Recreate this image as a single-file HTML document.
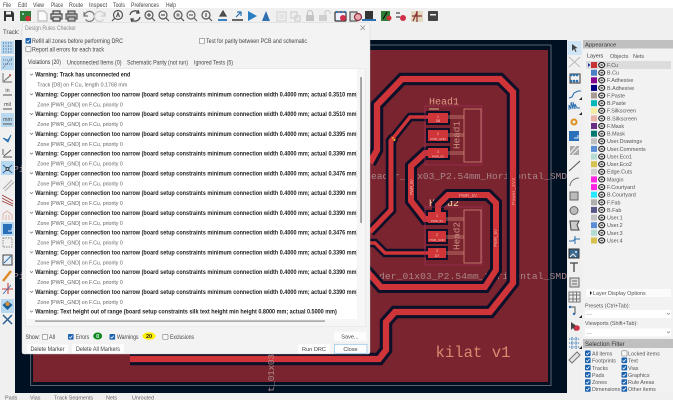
<!DOCTYPE html>
<html><head><meta charset="utf-8"><style>
html,body{margin:0;padding:0;background:#f0f0f0;width:673px;height:400px;overflow:hidden}
svg{display:block;filter:blur(.35px)}
text{font-family:"Liberation Sans",sans-serif}
.m{font-family:"Liberation Mono",monospace}
.menu{font-size:6.2px;fill:#444}
.w{font-size:6.2px;font-weight:bold;fill:#222}
.s{font-size:5.800px;fill:#666}
.d{font-size:6px;fill:#444}
.l{font-size:5.400px;fill:#555}
.f{font-size:5.400px;fill:#555}
.st{font-size:5.400px;fill:#666}
.pad{font-size:3.600px;fill:#f2c4c4;text-anchor:middle}
.lab{font-size:4.400px;fill:#eeb0a8}
</style></head><body>
<svg width="673" height="400" viewBox="0 0 673 400" xmlns="http://www.w3.org/2000/svg">
<defs>
<clipPath id="cv"><rect x="15" y="40" width="552" height="353"/></clipPath>
<clipPath id="lc"><rect x="26" y="69" width="331" height="250"/></clipPath>
<g id="eye"><ellipse cx="0" cy="0" rx="3" ry="2.600" fill="#e8e8e8" stroke="#222" stroke-width="1.100"/><ellipse cx="0" cy="0" rx="1.400" ry=".8" fill="#555"/></g>
<g id="ck"><rect x="0" y="0" width="5.600" height="5.600" rx=".8" fill="#1a62b0"/><path d="M1.200 2.900l1.100 1.200 2.100-2.500" fill="none" stroke="#fff" stroke-width=".8"/></g>
<g id="un"><rect x=".3" y=".3" width="5.200" height="5.200" rx=".8" fill="#fafafa" stroke="#777" stroke-width=".6"/></g>
</defs>

<rect width="673" height="400" fill="#f0f0f0"/>
<rect width="673" height="8" fill="#fff"/>
<text class="menu" x="3" y="7" textLength="8" lengthAdjust="spacingAndGlyphs">File</text><text class="menu" x="18" y="7" textLength="9" lengthAdjust="spacingAndGlyphs">Edit</text><text class="menu" x="33" y="7" textLength="11" lengthAdjust="spacingAndGlyphs">View</text><text class="menu" x="51" y="7" textLength="12" lengthAdjust="spacingAndGlyphs">Place</text><text class="menu" x="69" y="7" textLength="14" lengthAdjust="spacingAndGlyphs">Route</text><text class="menu" x="89" y="7" textLength="18" lengthAdjust="spacingAndGlyphs">Inspect</text><text class="menu" x="113" y="7" textLength="12" lengthAdjust="spacingAndGlyphs">Tools</text><text class="menu" x="131" y="7" textLength="28" lengthAdjust="spacingAndGlyphs">Preferences</text><text class="menu" x="166" y="7" textLength="10" lengthAdjust="spacingAndGlyphs">Help</text>

<!-- top toolbar -->
<g fill="none" stroke-width="1.200">
<path d="M4 11h8l2 2v8H4z" fill="#333"/><rect x="6" y="11.500" width="5" height="3" fill="#eee"/><rect x="6" y="17" width="6" height="4" fill="#eee"/>
<rect x="20" y="11" width="11" height="10" fill="#2f7d37"/><circle cx="28" cy="18.500" r="2.800" fill="#d0303a"/><circle cx="23" cy="14" r="1" fill="#bde"/>
<path d="M38 11h6l3 3v7h-9z" stroke="#bbb" fill="#fafafa"/>
<path d="M53 14v-3h7v3M53 19h-2v-5h11v5h-2M53 17h7v4h-7z" stroke="#444" fill="#ddd"/>
<path d="M68 14v-3h7v3M68 19h-2v-5h11v5h-2M68 17h7v4h-7z" stroke="#555" fill="#bbb"/>
<path d="M84 12v4h4M84.500 15.500a5 5 0 1 1 1 4" stroke="#777"/>
<path d="M105 12v4h-4M104.500 15.500a5 5 0 1 0-1 4" stroke="#ccc"/>
<circle cx="118" cy="15" r="4.500" stroke="#555"/><path d="M114.500 18.500l-2.500 2.500M116.500 17l1.500-4 1.500 4" stroke="#555"/>
<path d="M130 15a5 5 0 0 1 9-2M140 17a5 5 0 0 1-9 2" stroke="#444"/><path d="M138 10l1 3-3 0M132 22l-1-3 3 0" stroke="#444"/>
<circle cx="149" cy="15" r="4" stroke="#555"/><path d="M152 18l3 3M147 15h4M149 13v4" stroke="#555"/>
<circle cx="163" cy="15" r="4" stroke="#555"/><path d="M166 18l3 3M161 15h4" stroke="#555"/>
<circle cx="178" cy="15" r="4" stroke="#555"/><path d="M181 18l3 3" stroke="#555"/><rect x="176.500" y="13.500" width="3" height="3" fill="#888"/>
<circle cx="191" cy="15" r="4" stroke="#666"/><path d="M194 18l3 3" stroke="#666"/><rect x="189" y="14" width="4" height="2" fill="#999"/>
<circle cx="206" cy="15" r="4" stroke="#555"/><path d="M209 18l3 3M206 13v4" stroke="#555"/>
<path d="M219 20h7M223 11l-3 5h6z" stroke="#444" fill="#555"/><rect x="218" y="19" width="9" height="2" fill="#3a7fc0"/>
<path d="M233 20h10M236 17l5-5M241 16v-4h-4" stroke="#2a6fb0"/><rect x="232" y="19" width="11" height="2" fill="#666"/>
<path d="M248 11v10l9-5z" fill="#2a7fc0"/><path d="M262 21l4-10 4 10z" fill="#2f6fae"/>
<path d="M277 12h9v9h-9z" stroke="#d5d5d5"/><rect x="279" y="14" width="5" height="5" fill="#e3e3e3"/>
<path d="M291 12h6v6h-6zM295 16h5v5h-5z" stroke="#d0d0d0"/>
<rect x="306" y="15" width="8" height="6" fill="#c4c4c4"/><path d="M307.500 15v-2a2.500 2.500 0 0 1 5 0v2" stroke="#c4c4c4"/>
<rect x="319" y="15" width="8" height="6" fill="#cfcfcf"/><path d="M325 15v-2a2.500 2.500 0 0 1 5 0v1" stroke="#cfcfcf"/>
<rect x="335" y="12" width="11" height="9" rx="1" stroke="#333" fill="#eef"/><circle cx="337" cy="12" r="1.100" fill="#2a6fb0"/><circle cx="341" cy="12" r="1.100" fill="#2a6fb0"/><circle cx="345" cy="12" r="1.100" fill="#2a6fb0"/><circle cx="343" cy="18" r="3" fill="#d0304a"/>
<rect x="350" y="12" width="7" height="9" stroke="#555" fill="#ddd"/><circle cx="358" cy="17" r="3.500" stroke="#903040" fill="#e8a8b0"/>
<rect x="365" y="11" width="8" height="8" fill="#333"/><rect x="362" y="19" width="14" height="2" fill="#2a6fb0"/>
<rect x="381" y="11" width="9" height="10" fill="#2f7d37"/><path d="M383 19l4-7" stroke="#111"/><circle cx="389" cy="18" r="2.500" fill="#d0303a"/>
<path d="M396 13h4M396 17h4" stroke="#888" stroke-width="2"/><circle cx="403" cy="18" r="3" fill="#d0304a"/>
<rect x="411" y="11" width="12" height="11" fill="#e2d9c0"/><path d="M412 16h10M417 11v11M417 12l-4 9" stroke="#8a3030"/>
<rect x="428" y="11" width="10" height="10" rx="1" fill="#444"/><rect x="430" y="14" width="6" height="1.500" fill="#eee"/>
</g>
<text class="st" x="3" y="34" style="fill:#444;font-size:6px">Track: 1.</text>

<!-- canvas -->
<rect x="15" y="40" width="552" height="353" fill="#001023"/>
<g clip-path="url(#cv)">
<rect x="30.700" y="45" width="520.300" height="340.500" fill="none" stroke="#707a84" stroke-width=".8"/>
<rect x="33" y="50" width="515" height="332" fill="#7a2430"/>

<!-- text that sits behind the copper -->
<text class="m" x="371" y="179" font-size="9.600" fill="#a98688" textLength="196">eader_01x03_P2.54mm_Horizontal_SMD</text>
<text class="m" x="379" y="279" font-size="9.600" fill="#a98688" textLength="188">der_01x03_P2.54mm_Horizontal_SMD</text>
<text class="m" x="429" y="206" font-size="10" fill="#f0d8a8" textLength="30">Head2</text>

<!-- halos -->
<g fill="none" stroke="#0c1029" stroke-linejoin="miter">
<path stroke-width="12.500" d="M370 163L377 150V105L402 79H500L513 92V283L490 312H395L386 322V350L379 359H130"/>
<path stroke-width="12" d="M366 270L381 287H485L496 270V203L488 195H448L438 205V222"/>
<path stroke-width="12" d="M438 153H425L411 166V201L425 219H438"/>
<path stroke-width="8.500" d="M428 117H410L394 137"/>
<path stroke-width="10.500" d="M394 137L391 141V210L370 232"/>
<path stroke-width="8.500" d="M438 253H385L375 243H366"/>
</g>
<!-- pad halos -->
<g fill="#0c1029"><rect x="426" y="111" width="24" height="14"/><rect x="426" y="128" width="24" height="15"/><rect x="426" y="146" width="24" height="14"/><rect x="426" y="210" width="22" height="15"/><rect x="426" y="229" width="22" height="15"/><rect x="426" y="246" width="22" height="14"/></g>
<g fill="none" stroke="#cf3538" stroke-linejoin="miter">
<path stroke-width="6.300" d="M370 163L377 150V105L402 79H500L513 92V283L490 312H395L386 322V350L379 359H130"/>
<path stroke-width="6" d="M366 270L381 287H485L496 270V203L488 195H448L438 205V222"/>
<path stroke-width="6" d="M438 153H425L411 166V201L425 219H438"/>
<path stroke-width="3.500" d="M428 117H410L394 137"/>
<path stroke-width="5" d="M394 137L391 141V210L370 232"/>
<path stroke-width="3.500" d="M438 253H385L375 243H366"/>
</g>
<!-- pads -->
<g fill="#cf3538"><rect x="428" y="113" width="20" height="10"/><rect x="428" y="130" width="20" height="11"/><rect x="428" y="148" width="20" height="10"/><rect x="428" y="212" width="18" height="11"/><rect x="428" y="231" width="18" height="11"/><rect x="428" y="248" width="18" height="10"/></g>
<text class="pad" x="438" y="118">1</text><text class="pad" x="438" y="122">D8</text>
<text class="pad" x="438" y="135">2</text><text class="pad" x="438" y="140" style="font-size:3px">PWR_GND</text>
<text class="pad" x="438" y="153">3</text><text class="pad" x="438" y="157.500" style="font-size:3px">PWR_5V</text>
<text class="pad" x="437" y="217">1</text><text class="pad" x="437" y="222" style="font-size:3px">PWR_5V</text>
<text class="pad" x="437" y="236">2</text><text class="pad" x="437" y="241" style="font-size:3px">PWR_GND</text>
<text class="pad" x="437" y="252">3</text><text class="pad" x="437" y="257">D7</text>

<!-- silkscreen / fab -->
<g fill="none">
<rect x="425" y="106" width="57" height="59" stroke="#a03058" stroke-width=".7"/>
<rect x="425" y="207" width="57" height="58" stroke="#a03058" stroke-width=".7"/>
<g stroke="#d08a78" stroke-width=".8">
<rect x="464" y="109" width="17" height="53"/><rect x="464" y="210" width="17" height="53"/>
<path d="M448 116h16M448 118h16M448 134h16M448 136h16M448 152h16M448 154h16M446 218h18M446 220h18M446 236h18M446 238h18M446 252h18M446 254h18"/>
</g>
</g>
<path d="M429 109h10" stroke="#e8d8a0" stroke-width=".8"/>
<circle cx="393" cy="138" r="1" fill="#e0a030"/><circle cx="394.500" cy="140" r="1" fill="#e0c030"/>
<text class="m" x="429" y="104.500" font-size="10" fill="#dd9a82" textLength="30">Head1</text>
<text class="m" transform="translate(459.500 149) rotate(-90)" font-size="9.400" fill="#cc9080" textLength="28">Head1</text>
<text class="m" transform="translate(459.500 250) rotate(-90)" font-size="9.400" fill="#cc9080" textLength="28">Head2</text>
<text class="m" x="435.500" y="357" font-size="15.600" fill="#d98a6e" textLength="75">kilat v1</text>
<text class="m" transform="translate(274 392) rotate(-90)" font-size="9.600" fill="#a98688" textLength="38">t_01x03</text>
<text class="m" x="13" y="172" font-size="9.600" fill="#a98688">Pi</text>
<text class="m" x="13" y="279" font-size="9.600" fill="#a98688">Pi</text>
<text class="lab" transform="translate(413 195) rotate(-90)" textLength="16">PWR_5V</text>
<text class="lab" transform="translate(497 247) rotate(-90)" textLength="18">PWR_5V</text>
<text class="lab" transform="translate(515 205) rotate(-90)" textLength="27">Power_3V3</text>
<text class="lab" x="459" y="197" textLength="18">PWR_5V</text>
</g>

<!-- left toolbar -->
<rect x="0" y="40" width="15" height="353" fill="#f0f0f0"/>
<g fill="#b8d8f0"><rect x="1" y="41" width="13" height="13"/><rect x="1" y="56" width="13" height="14"/><rect x="1" y="113" width="13" height="14"/><rect x="1" y="161" width="13" height="14"/><rect x="1" y="222" width="13" height="14"/><rect x="1" y="299" width="13" height="14"/></g>
<g fill="none" stroke="#555" stroke-width=".9">
<path d="M3 43h9M3 46h9M3 49h9M3 52h9" stroke="#3a5a8a" stroke-dasharray="1 1.500"/>
<path d="M3 68L12 58M3 60h9M3 64h9" stroke="#5a6a8a" stroke-dasharray="1 1"/>
<path d="M3 73v9h9M4 81l7-6" stroke="#666"/><circle cx="10" cy="75" r="1" fill="#d05050" stroke="none"/>
<path d="M3 95h9M3 109h9M3 124h9" stroke="#555"/>
<path d="M3 138l5 2 3-5-3 7z" fill="#2a6fb0" stroke="#2a6fb0"/>
<path d="M3 155v-6M3 157h9M4 156l7-6" stroke="#555"/>
<path d="M3 165l9 8M3 173l9-8" stroke="#2a5f90"/><circle cx="7.500" cy="169" r="1.500" fill="#b8d8f0" stroke="#333"/>
<path d="M3 189l9-9M5 191l9-9" stroke="#aaa"/>
<path d="M2 195l11 6M2 198l11 6M2 201l11 5" stroke="#a04040"/>
<path d="M3 220v-6l4-3 5 4v5M6 220v-5M9 220v-5" stroke="#e0b0a8"/>
<rect x="3" y="224" width="9" height="10" fill="#2a70b8" stroke="none"/><path d="M8 231h4v-3" stroke="#dcecff"/>
<rect x="3" y="238" width="9" height="9" stroke="#888" stroke-dasharray="1.500 1"/>
<rect x="3" y="255" width="9" height="10" stroke="#333" fill="#e8eef5"/><path d="M4 263l7-7" stroke="#2a6fb0"/>
<path d="M3 281l8-10" stroke="#e08a2a" stroke-width="2.500"/>
<path d="M2 289h11M8 283v11" stroke="#d04040" stroke-width="1.100"/><path d="M3 294l8-9" stroke="#3a6fb0"/>
<path d="M7.500 301l5 4-5 5-5-5z" fill="#1a5f9a" stroke="none"/><circle cx="7.500" cy="304" r="2" fill="#e09030" stroke="none"/>
<path d="M3 315l9 9M12 315l-9 9" stroke="#2a5f90" stroke-width="1.500"/>
</g>
<g text-anchor="middle">
<text x="7.500" y="92" font-size="5.400" fill="#444">in</text>
<text x="7.500" y="106" font-size="5.400" fill="#444">mil</text>
<text x="7.500" y="121" font-size="5.400" fill="#444">mm</text>
</g>

<!-- right toolbar -->
<rect x="567" y="40" width="16" height="353" fill="#f0f0f0"/>
<rect x="567.500" y="41" width="14" height="14" fill="#cfe4f5"/>
<g fill="none" stroke="#555" stroke-width="1">
<path d="M572 44l0 7 2-2 1.500 3 1-.5-1.500-3 2.500-.5z" fill="#444" stroke="none"/>
<path d="M569 57l11 10M580 57l-11 10" stroke="#bbb"/>
<rect x="570" y="74" width="10" height="9" stroke="#333"/><g fill="#2a6fb0" stroke="none"><circle cx="571" cy="75" r="1.300"/><circle cx="574" cy="75" r="1.300"/><circle cx="577" cy="75" r="1.300"/><circle cx="571" cy="81" r="1.300"/><circle cx="574" cy="81" r="1.300"/><circle cx="577" cy="81" r="1.300"/></g>
<path d="M569 98l3-1 2-4 4-2h3" stroke="#2a6fb0" stroke-width="1.100"/><path d="M579 100h3v-3z" fill="#222" stroke="none"/>
<path d="M569 110v-5l2 4v-7l2 7v-7l2 7v-5l2 4h3" stroke="#2a6fb0" stroke-width=".9"/><path d="M579 115h3v-3z" fill="#222" stroke="none"/>
<circle cx="574" cy="122" r="2.500" stroke="#e09020" stroke-width="2"/>
<rect x="569" y="131" width="10" height="10" fill="#2a70b8" stroke="none"/><path d="M574 138h4v-3" stroke="#dcecff"/>
<rect x="570" y="146" width="9" height="9" fill="#aaa" stroke="none"/><path d="M570 153l6-7M572 155l7-7" stroke="#eee"/>
<path d="M569 171l11-10" stroke="#555"/><path d="M570 186c0-4 4-8 9-8" stroke="#777"/>
<rect x="570" y="192" width="8" height="8" fill="#bbb" stroke="#666"/>
<circle cx="574" cy="210.500" r="4" fill="#bbb" stroke="#666"/>
<path d="M570 221h9l-2 4 2 5h-8z" fill="#ccc" stroke="#444"/>
<path d="M569 241h4l2-2h5M575 236v8" stroke="#2a6fb0"/>
<rect x="569" y="249" width="10" height="9" fill="#3a6a90" stroke="#333"/><circle cx="576" cy="252" r="1" fill="#eee" stroke="none"/><path d="M570 257l3-3 3 3" stroke="#eee"/>
<path d="M570 263h8M574 263v9" stroke="#444" stroke-width="1.300"/>
<rect x="570" y="278" width="9" height="9" fill="#ddd" stroke="#666"/><path d="M572 281h5M572 284h5" stroke="#666"/>
<rect x="569" y="292" width="11" height="10" stroke="#777"/><path d="M569 295h11M569 299h11M573 292v10M576.500 292v10" stroke="#777"/>
<path d="M570 307h5v7" stroke="#555"/><circle cx="570" cy="307" r="1.200" fill="#2a6fb0" stroke="none"/><circle cx="574" cy="314" r="1.200" fill="#2a6fb0" stroke="none"/><path d="M579 318h3v-3z" fill="#222" stroke="none"/>
<path d="M571 322l0 8 2-2 2 3 1-1-1-3h3z" fill="#444" stroke="none"/><circle cx="577" cy="328" r="2.800" fill="#d0304a" stroke="none"/>
<path d="M569 339h11M569 343h11M569 347h11M572 337v12M576 337v12" stroke="#2a6fb0" stroke-dasharray="1.200 1"/><path d="M579 349h3v-3z" fill="#222" stroke="none"/>
<path d="M569 360l8-8 3 3-8 8z" stroke="#777" fill="#e4e4e4"/>
</g>

<!-- appearance panel -->
<rect x="583" y="40" width="90" height="353" fill="#f2f2f2"/>
<rect x="583" y="40" width="90" height="8.500" fill="#c0c0c0"/>
<text class="f" x="585" y="46.500" style="font-size:5.800px;fill:#333">Appearance</text>
<text class="l" x="587" y="57.500" style="fill:#333">Layers</text><text class="l" x="610" y="58">Objects</text><text class="l" x="633" y="58">Nets</text>
<rect x="586" y="61" width="85" height="8" fill="#dcdcdc"/>
<path d="M588 63v4l2.500-2z" fill="#2233aa"/>
<g>
<rect x="591" y="62" width="6" height="6" fill="#c83434"/><use href="#eye" x="601.700" y="65"/><text class="l" x="607" y="67">F.Cu</text>
<rect x="591" y="69.700" width="6" height="6" fill="#4d7fc4"/><use href="#eye" x="601.700" y="72.700"/><text class="l" x="607" y="74.600">B.Cu</text>
<rect x="591" y="77.300" width="6" height="6" fill="#84008f"/><use href="#eye" x="601.700" y="80.300"/><text class="l" x="607" y="82.200">F.Adhesive</text>
<rect x="591" y="84.900" width="6" height="6" fill="#000084"/><use href="#eye" x="601.700" y="87.900"/><text class="l" x="607" y="89.900">B.Adhesive</text>
<rect x="591" y="92.500" width="6" height="6" fill="#a99a94"/><use href="#eye" x="601.700" y="95.500"/><text class="l" x="607" y="97.500">F.Paste</text>
<rect x="591" y="100.200" width="6" height="6" fill="#00b8b8"/><use href="#eye" x="601.700" y="103.200"/><text class="l" x="607" y="105.100">B.Paste</text>
<rect x="591" y="107.800" width="6" height="6" fill="#f2eda1"/><use href="#eye" x="601.700" y="110.800"/><text class="l" x="607" y="112.700">F.Silkscreen</text>
<rect x="591" y="115.400" width="6" height="6" fill="#e8b2a7"/><use href="#eye" x="601.700" y="118.400"/><text class="l" x="607" y="120.400">B.Silkscreen</text>
<rect x="591" y="123" width="6" height="6" fill="#6a2c84"/><use href="#eye" x="601.700" y="126"/><text class="l" x="607" y="128">F.Mask</text>
<rect x="591" y="130.700" width="6" height="6" fill="#027a70"/><use href="#eye" x="601.700" y="133.700"/><text class="l" x="607" y="135.600">B.Mask</text>
<rect x="591" y="138.300" width="6" height="6" fill="#c2c2c2"/><use href="#eye" x="601.700" y="141.300"/><text class="l" x="607" y="143.200">User.Drawings</text>
<rect x="591" y="145.900" width="6" height="6" fill="#5a8fd6"/><use href="#eye" x="601.700" y="148.900"/><text class="l" x="607" y="150.900">User.Comments</text>
<rect x="591" y="153.600" width="6" height="6" fill="#b4dbd2"/><use href="#eye" x="601.700" y="156.600"/><text class="l" x="607" y="158.500">User.Eco1</text>
<rect x="591" y="161.200" width="6" height="6" fill="#d6c24f"/><use href="#eye" x="601.700" y="164.200"/><text class="l" x="607" y="166.100">User.Eco2</text>
<rect x="591" y="168.800" width="6" height="6" fill="#d0d2cd"/><use href="#eye" x="601.700" y="171.800"/><text class="l" x="607" y="173.700">Edge.Cuts</text>
<rect x="591" y="176.400" width="6" height="6" fill="#ff26e2"/><use href="#eye" x="601.700" y="179.400"/><text class="l" x="607" y="181.400">Margin</text>
<rect x="591" y="184.100" width="6" height="6" fill="#ff26e2"/><use href="#eye" x="601.700" y="187.100"/><text class="l" x="607" y="189">F.Courtyard</text>
<rect x="591" y="191.700" width="6" height="6" fill="#26e9ff"/><use href="#eye" x="601.700" y="194.700"/><text class="l" x="607" y="196.600">B.Courtyard</text>
<rect x="591" y="199.300" width="6" height="6" fill="#afafaf"/><use href="#eye" x="601.700" y="202.300"/><text class="l" x="607" y="204.300">F.Fab</text>
<rect x="591" y="206.900" width="6" height="6" fill="#58598a"/><use href="#eye" x="601.700" y="209.900"/><text class="l" x="607" y="211.900">B.Fab</text>
<rect x="591" y="214.600" width="6" height="6" fill="#c2c2c2"/><use href="#eye" x="601.700" y="217.600"/><text class="l" x="607" y="219.500">User.1</text>
<rect x="591" y="222.200" width="6" height="6" fill="#5a8fd6"/><use href="#eye" x="601.700" y="225.200"/><text class="l" x="607" y="227.100">User.2</text>
<rect x="591" y="229.800" width="6" height="6" fill="#b4dbd2"/><use href="#eye" x="601.700" y="232.800"/><text class="l" x="607" y="234.800">User.3</text>
<rect x="591" y="237.500" width="6" height="6" fill="#d6c24f"/><use href="#eye" x="601.700" y="240.500"/><text class="l" x="607" y="242.400">User.4</text>
</g>
<rect x="586" y="289" width="85" height="8" fill="#fbfbfb"/>
<path d="M590 291v4l2-2z" fill="#222"/><text class="l" x="593" y="295">Layer Display Options</text>
<text class="l" x="585" y="307.500">Presets (Ctrl+Tab):</text>
<rect x="585" y="310" width="86" height="8" fill="#fff"/><text class="l" x="586.500" y="316" style="fill:#888">---</text><path d="M667 313l1.500 1.500 1.500-1.500" fill="none" stroke="#777" stroke-width=".6"/>
<text class="l" x="585" y="325">Viewports (Shift+Tab):</text>
<rect x="585" y="328.500" width="86" height="8" fill="#fff"/><text class="l" x="586.500" y="334.500" style="fill:#888">---</text><path d="M667 331.500l1.500 1.500 1.500-1.500" fill="none" stroke="#777" stroke-width=".6"/>
<rect x="583" y="339" width="90" height="9" fill="#c0c0c0"/>
<text class="f" x="585" y="346" style="font-size:6px;fill:#333">Selection Filter</text>
<use href="#ck" x="585" y="350.500"/><text class="l" x="592" y="355.500">All items</text><use href="#un" x="621.500" y="350.500"/><text class="l" x="628" y="355.500">Locked items</text>
<use href="#ck" x="585" y="357.500"/><text class="l" x="592" y="362.500">Footprints</text><use href="#ck" x="621.500" y="357.500"/><text class="l" x="628" y="362.500">Text</text>
<use href="#ck" x="585" y="364.800"/><text class="l" x="592" y="369.800">Tracks</text><use href="#ck" x="621.500" y="364.800"/><text class="l" x="628" y="369.800">Vias</text>
<use href="#ck" x="585" y="372"/><text class="l" x="592" y="377">Pads</text><use href="#ck" x="621.500" y="372"/><text class="l" x="628" y="377">Graphics</text>
<use href="#ck" x="585" y="379.200"/><text class="l" x="592" y="384.200">Zones</text><use href="#ck" x="621.500" y="379.200"/><text class="l" x="628" y="384.200">Rule Areas</text>
<use href="#ck" x="585" y="386.200"/><text class="l" x="592" y="391.200">Dimensions</text><use href="#ck" x="621.500" y="386.200"/><text class="l" x="628" y="391.200">Other items</text>

<!-- status bar -->
<text class="st" x="5" y="399.500">Pads</text><text class="st" x="30" y="399.500">Vias</text><text class="st" x="54" y="399.500">Track Segments</text><text class="st" x="106" y="399.500">Nets</text><text class="st" x="132" y="399.500">Unrouted</text>

<!-- dialog -->
<rect x="22" y="22.500" width="348" height="331.500" rx="2" fill="#f3f3f3" stroke="#ccc" stroke-width=".4"/>
<text x="25" y="30" font-size="6" fill="#8a8a8a" textLength="51" lengthAdjust="spacingAndGlyphs">Design Rules Checker</text>
<path d="M360.500 25.500l4.500 4.500M365 25.500l-4.500 4.500" stroke="#888" stroke-width=".7" fill="none"/>
<use href="#ck" x="25.500" y="38"/><text class="d" x="32" y="43" textLength="91" lengthAdjust="spacingAndGlyphs">Refill all zones before performing DRC</text>
<use href="#un" x="25.500" y="46.300"/><text class="d" x="32" y="51.300" textLength="72" lengthAdjust="spacingAndGlyphs">Report all errors for each track</text>
<use href="#un" x="199" y="38"/><text class="d" x="206" y="43" textLength="101" lengthAdjust="spacingAndGlyphs">Test for parity between PCB and schematic</text>
<rect x="26" y="57" width="36" height="12" fill="#f8f8f8"/>
<text class="d" x="28" y="64" textLength="33" lengthAdjust="spacingAndGlyphs" style="fill:#333">Violations (20)</text><text class="d" x="67" y="64.500" textLength="54.500" lengthAdjust="spacingAndGlyphs">Unconnected Items (0)</text><text class="d" x="127" y="64.500" textLength="61" lengthAdjust="spacingAndGlyphs">Schematic Parity (not run)</text><text class="d" x="194" y="64.500" textLength="39" lengthAdjust="spacingAndGlyphs">Ignored Tests (5)</text>

<rect x="25.500" y="68.500" width="340" height="258" fill="#f6f6f6" stroke="#e2e2e2" stroke-width=".5"/>
<rect x="26" y="69" width="331" height="250" fill="#fff"/>
<rect x="360.300" y="77" width="1.500" height="146" fill="#8c8c8c"/>
<rect x="35" y="320.500" width="290" height="1.200" fill="#8c8c8c"/>
<g clip-path="url(#lc)">
<path d="M30 73.700l1.500 1.500 1.500-1.500M30 93.400l1.500 1.500 1.500-1.500M30 113.200l1.500 1.500 1.500-1.500M30 132.900l1.500 1.500 1.500-1.500M30 152.700l1.500 1.500 1.500-1.500M30 172.400l1.500 1.500 1.500-1.500M30 192.200l1.500 1.500 1.500-1.500M30 211.900l1.500 1.500 1.500-1.500M30 231.700l1.500 1.500 1.500-1.500M30 251.400l1.500 1.500 1.500-1.500M30 271.200l1.500 1.500 1.500-1.500M30 290.900l1.500 1.500 1.500-1.500M30 310.700l1.500 1.500 1.500-1.500" fill="none" stroke="#555" stroke-width=".6"/>
<text class="w" x="35.300" y="76.700" textLength="95" lengthAdjust="spacingAndGlyphs">Warning: Track has unconnected end</text>
<text class="s" x="37.300" y="86.500" textLength="90" lengthAdjust="spacingAndGlyphs">Track [D8] on F.Cu, length 0.1768 mm</text>
<text class="w" x="35.300" y="96.500" textLength="323" lengthAdjust="spacingAndGlyphs">Warning: Copper connection too narrow (board setup constraints minimum connection width 0.4000 mm; actual 0.3510 mm)</text>
<text class="s" x="37.300" y="106.300" textLength="85.500" lengthAdjust="spacingAndGlyphs">Zone [PWR_GND] on F.Cu, priority 0</text>
<text class="w" x="35.300" y="116.200" textLength="323" lengthAdjust="spacingAndGlyphs">Warning: Copper connection too narrow (board setup constraints minimum connection width 0.4000 mm; actual 0.3510 mm)</text>
<text class="s" x="37.300" y="126" textLength="85.500" lengthAdjust="spacingAndGlyphs">Zone [PWR_GND] on F.Cu, priority 0</text>
<text class="w" x="35.300" y="136" textLength="323" lengthAdjust="spacingAndGlyphs">Warning: Copper connection too narrow (board setup constraints minimum connection width 0.4000 mm; actual 0.3395 mm)</text>
<text class="s" x="37.300" y="145.800" textLength="85.500" lengthAdjust="spacingAndGlyphs">Zone [PWR_GND] on F.Cu, priority 0</text>
<text class="w" x="35.300" y="155.700" textLength="323" lengthAdjust="spacingAndGlyphs">Warning: Copper connection too narrow (board setup constraints minimum connection width 0.4000 mm; actual 0.3390 mm)</text>
<text class="s" x="37.300" y="165.500" textLength="85.500" lengthAdjust="spacingAndGlyphs">Zone [PWR_GND] on F.Cu, priority 0</text>
<text class="w" x="35.300" y="175.500" textLength="323" lengthAdjust="spacingAndGlyphs">Warning: Copper connection too narrow (board setup constraints minimum connection width 0.4000 mm; actual 0.3476 mm)</text>
<text class="s" x="37.300" y="185.300" textLength="85.500" lengthAdjust="spacingAndGlyphs">Zone [PWR_GND] on F.Cu, priority 0</text>
<text class="w" x="35.300" y="195.200" textLength="323" lengthAdjust="spacingAndGlyphs">Warning: Copper connection too narrow (board setup constraints minimum connection width 0.4000 mm; actual 0.3390 mm)</text>
<text class="s" x="37.300" y="205" textLength="85.500" lengthAdjust="spacingAndGlyphs">Zone [PWR_GND] on F.Cu, priority 0</text>
<text class="w" x="35.300" y="215" textLength="323" lengthAdjust="spacingAndGlyphs">Warning: Copper connection too narrow (board setup constraints minimum connection width 0.4000 mm; actual 0.3390 mm)</text>
<text class="s" x="37.300" y="224.800" textLength="85.500" lengthAdjust="spacingAndGlyphs">Zone [PWR_GND] on F.Cu, priority 0</text>
<text class="w" x="35.300" y="234.700" textLength="323" lengthAdjust="spacingAndGlyphs">Warning: Copper connection too narrow (board setup constraints minimum connection width 0.4000 mm; actual 0.3476 mm)</text>
<text class="s" x="37.300" y="244.500" textLength="85.500" lengthAdjust="spacingAndGlyphs">Zone [PWR_GND] on F.Cu, priority 0</text>
<text class="w" x="35.300" y="254.500" textLength="323" lengthAdjust="spacingAndGlyphs">Warning: Copper connection too narrow (board setup constraints minimum connection width 0.4000 mm; actual 0.3390 mm)</text>
<text class="s" x="37.300" y="264.300" textLength="85.500" lengthAdjust="spacingAndGlyphs">Zone [PWR_GND] on F.Cu, priority 0</text>
<text class="w" x="35.300" y="274.200" textLength="323" lengthAdjust="spacingAndGlyphs">Warning: Copper connection too narrow (board setup constraints minimum connection width 0.4000 mm; actual 0.3390 mm)</text>
<text class="s" x="37.300" y="284" textLength="85.500" lengthAdjust="spacingAndGlyphs">Zone [PWR_GND] on F.Cu, priority 0</text>
<text class="w" x="35.300" y="294" textLength="323" lengthAdjust="spacingAndGlyphs">Warning: Copper connection too narrow (board setup constraints minimum connection width 0.4000 mm; actual 0.3390 mm)</text>
<text class="s" x="37.300" y="303.800" textLength="85.500" lengthAdjust="spacingAndGlyphs">Zone [PWR_GND] on F.Cu, priority 0</text>
<text class="w" x="35.300" y="313.700" textLength="301.500" lengthAdjust="spacingAndGlyphs">Warning: Text height out of range (board setup constraints silk text height min height 0.8000 mm; actual 0.5000 mm)</text>
</g>

<text class="d" x="25.500" y="338.800" textLength="14.500" lengthAdjust="spacingAndGlyphs">Show:</text>
<use href="#un" x="42" y="334"/><text class="d" x="49" y="338.800" textLength="6" lengthAdjust="spacingAndGlyphs">All</text>
<use href="#ck" x="68" y="334"/><text class="d" x="75.700" y="338.800" textLength="13.500" lengthAdjust="spacingAndGlyphs">Errors</text>
<ellipse cx="97.700" cy="336" rx="4.500" ry="3.500" fill="#0f8a1f"/><text x="97.700" y="338" font-size="5" font-weight="bold" fill="#fff" text-anchor="middle">0</text>
<use href="#ck" x="109.500" y="334"/><text class="d" x="117" y="338.800" textLength="21.500" lengthAdjust="spacingAndGlyphs">Warnings</text>
<ellipse cx="149" cy="336" rx="6.500" ry="3.800" fill="#ffee00"/><text x="149" y="338" font-size="5.500" font-weight="bold" fill="#222" text-anchor="middle">20</text>
<use href="#un" x="162.500" y="334"/><text class="d" x="170" y="338.800" textLength="24" lengthAdjust="spacingAndGlyphs">Exclusions</text>

<g fill="#fdfdfd">
<rect x="334" y="331.700" width="32" height="9"/>
<rect x="27" y="344.300" width="41" height="9"/>
<rect x="72" y="344.300" width="52" height="9"/>
<rect x="298" y="344.300" width="32" height="9"/>
<rect x="334.500" y="344.300" width="32.500" height="9" stroke="#8fc0e6" stroke-width=".7"/>
</g>
<text class="d" x="350" y="338.300" text-anchor="middle" style="font-size:5.600px">Save...</text>
<text class="d" x="47.500" y="350.800" text-anchor="middle" textLength="34" lengthAdjust="spacingAndGlyphs">Delete Marker</text>
<text class="d" x="98" y="350.800" text-anchor="middle" textLength="44" lengthAdjust="spacingAndGlyphs">Delete All Markers</text>
<text class="d" x="314" y="350.800" text-anchor="middle" style="font-size:5.600px">Run DRC</text>
<text class="d" x="350.500" y="350.800" text-anchor="middle" style="font-size:5.600px">Close</text>
</svg>
</body></html>
